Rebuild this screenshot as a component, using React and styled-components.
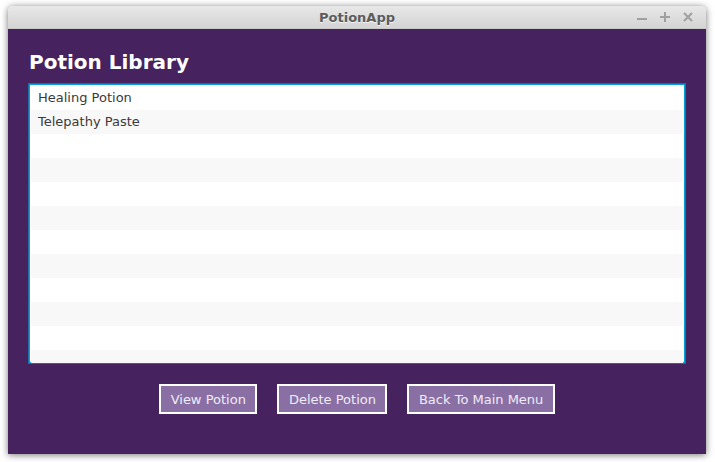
import styled, { createGlobalStyle } from "styled-components";

const GlobalStyle = createGlobalStyle`
  html, body {
    margin: 0;
    padding: 0;
    background: #ffffff;
    font-family: "DejaVu Sans", "Liberation Sans", sans-serif;
  }
`;

const potions = ["Healing Potion", "Telepathy Paste"];
const ROWS = 12;

export default function App() {
  const rows = Array.from({ length: ROWS }, (_, i) => potions[i] || "");

  return (
    <>
      <GlobalStyle />
      <Desktop>
        <Window>
          <TitleBar>
            <TitleText>PotionApp</TitleText>
            <Controls>
              <svg width="10" height="10" viewBox="0 0 10 10">
                <path d="M0 7h10" stroke="#a0a0a0" strokeWidth="2" />
              </svg>
              <svg width="10" height="10" viewBox="0 0 10 10">
                <path d="M0 5h10M5 0v10" stroke="#a0a0a0" strokeWidth="2" />
              </svg>
              <svg width="10" height="10" viewBox="0 0 10 10">
                <path d="M1 1l8 8M9 1l-8 8" stroke="#a0a0a0" strokeWidth="2" />
              </svg>
            </Controls>
          </TitleBar>
          <Content>
            <Heading>Potion Library</Heading>
            <ListBox>
              {rows.map((name, i) => (
                <Row key={i} $odd={i % 2 === 1}>{name}</Row>
              ))}
            </ListBox>
            <ButtonBar>
              <Button>View Potion</Button>
              <Button>Delete Potion</Button>
              <Button>Back To Main Menu</Button>
            </ButtonBar>
          </Content>
        </Window>
      </Desktop>
    </>
  );
}

const Desktop = styled.div`
  width: 715px;
  height: 462px;
  padding: 6px 9px 8px 8px;
  box-sizing: border-box;
  overflow: hidden;
`;

const Window = styled.div`
  width: 698px;
  height: 448px;
  display: flex;
  flex-direction: column;
  border-radius: 5px 5px 0 0;
  box-shadow: 0 1px 7px rgba(0, 0, 0, 0.55);
  overflow: hidden;
`;

const TitleBar = styled.div`
  height: 23px;
  flex-shrink: 0;
  position: relative;
  display: flex;
  align-items: center;
  justify-content: center;
  background: linear-gradient(#e8e8e8, #d4d4d4);
  border-bottom: 1px solid #c8c8c8;
  box-sizing: border-box;
`;

const TitleText = styled.div`
  font-weight: bold;
  font-size: 13px;
  color: #5c5c5c;
  text-shadow: 0 1px 0 #f4f4f4;
`;

const Controls = styled.div`
  position: absolute;
  right: 13px;
  top: 0;
  height: 100%;
  display: flex;
  align-items: center;
  gap: 13px;
`;

const Content = styled.div`
  flex: 1;
  background: #46235f;
  padding: 20px 20px 0 20px;
  display: flex;
  flex-direction: column;
`;

const Heading = styled.h1`
  margin: 0 0 0 1px;
  font-size: 20px;
  font-weight: bold;
  color: #ffffff;
  line-height: 26px;
  height: 34px;
`;

const ListBox = styled.div`
  height: 281px;
  flex-shrink: 0;
  box-sizing: border-box;
  border: 1px solid #1b6fa6;
  box-shadow: inset 0 0 0 1px #04a0d8;
  padding: 2px;
  background: #ffffff;
  overflow: hidden;
`;

const Row = styled.div`
  height: 24px;
  line-height: 23px;
  padding-left: 7px;
  font-size: 13px;
  color: #3a3a3a;
  background: ${(p) => (p.$odd ? "#f8f8f8" : "#ffffff")};
`;

const ButtonBar = styled.div`
  margin-top: 20px;
  display: flex;
  justify-content: center;
  gap: 20px;
`;

const Button = styled.button`
  height: 30px;
  padding: 0 9.5px;
  box-sizing: border-box;
  border: 2px solid #ffffff;
  background: #8a6fa5;
  color: #f0ecf5;
  font-family: "DejaVu Sans", "Liberation Sans", sans-serif;
  font-size: 13px;
  cursor: pointer;
`;
